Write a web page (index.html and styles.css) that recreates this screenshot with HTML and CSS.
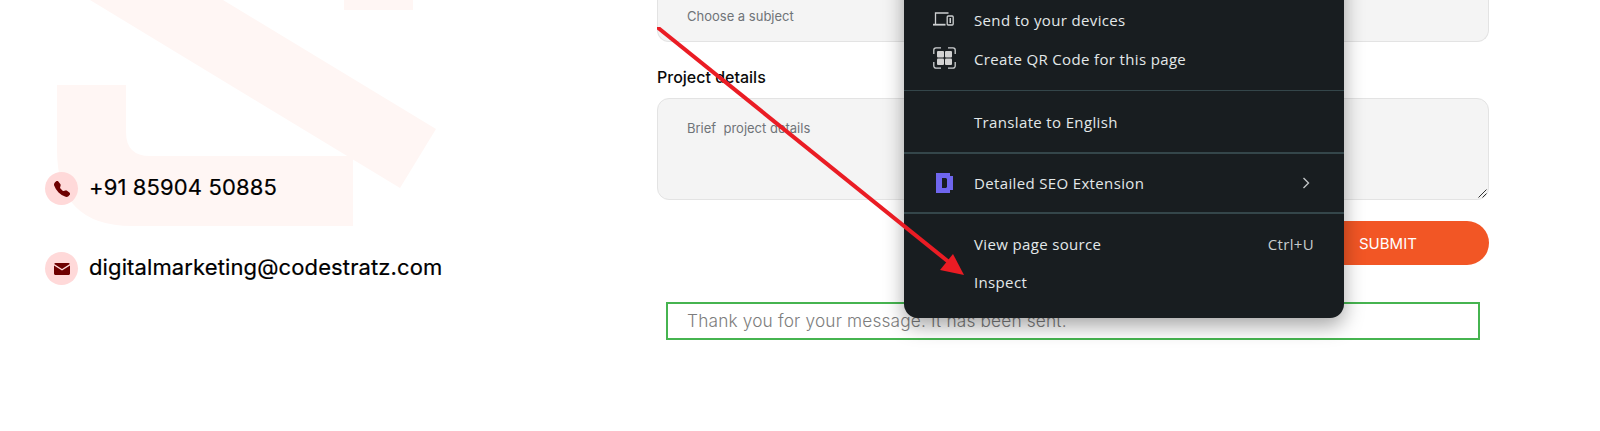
FILE: index.html
```html
<!DOCTYPE html>
<html lang="en">
<head>
<meta charset="utf-8">
<title>Contact</title>
<link rel="stylesheet" href="styles.css">
</head>
<body>
<div class="page">
  <svg class="watermark" width="440" height="230" viewBox="0 0 440 230" aria-hidden="true">
    <path d="M90 0H223L436 129L400 188Z"/>
    <path d="M344 0H413V10H344Z"/>
    <path d="M57 85H126V132Q126 156 150 156H353V226H132Q57 226 57 150Z"/>
  </svg>

  <section class="contact">
    <div class="contact-row">
      <span class="badge">
        <svg width="16" height="16" viewBox="0 0 16 16"><path d="M1.885.511a1.745 1.745 0 0 1 2.61.163L6.29 2.98c.329.423.445.974.315 1.494l-.547 2.19a.678.678 0 0 0 .178.643l2.457 2.457a.678.678 0 0 0 .644.178l2.189-.547a1.745 1.745 0 0 1 1.494.315l2.306 1.794c.829.645.905 1.87.163 2.611l-1.034 1.034c-.74.74-1.846 1.065-2.877.702a18.634 18.634 0 0 1-7.01-4.42 18.634 18.634 0 0 1-4.42-7.009c-.362-1.03-.037-2.137.703-2.877L1.885.511z"/></svg>
      </span>
      <span class="contact-text">+91 85904 50885</span>
    </div>
    <div class="contact-row">
      <span class="badge">
        <svg width="16" height="12" viewBox="0 0 16 12"><path d="M1.5 0h13c.6 0 1.1.4 1.3.9L8 6 .2.9C.4.4.9 0 1.5 0zM0 2.5V10.500c0 .8.700 1.500 1.500 1.500h13c.8 0 1.500-.7 1.500-1.500V2.500L8 7.600z"/></svg>
      </span>
      <span class="contact-text">digitalmarketing@codestratz.com</span>
    </div>
  </section>

  <section class="form">
    <div class="field field-top">Choose a subject</div>
    <div class="label">Project details</div>
    <div class="field field-area">
      Brief&nbsp; project details
      <svg class="grip" width="10" height="10" viewBox="0 0 10 10"><path d="M9.500 1.500L1.500 9.500M9.500 5.500L5.500 9.500" stroke="#333" stroke-width="1" fill="none"/></svg>
    </div>
    <div class="actions"><span class="submit">SUBMIT</span></div>
    <div class="notice">Thank you for your message. It has been sent.</div>
  </section>

  <nav class="menu">
    <div class="item item-a">
      <span class="icon">
        <svg class="devices" width="21" height="14" viewBox="0 0 21 14" fill="none" stroke="#cdd0d1" stroke-width="1.300"><path d="M2.500 12V1h13"/><path d="M0 12.700H12.500" stroke-width="1.800"/><rect x="14.200" y="4" width="6" height="9" rx="1"/><rect x="16.500" y="6" width="1.500" height="5" fill="#cdd0d1" stroke="none"/></svg>
      </span>
      <span>Send to your devices</span>
    </div>
    <div class="item item-b">
      <span class="icon">
        <svg class="qr" width="23" height="22" viewBox="0 0 23 22"><path d="M8 .8H3a2.200 2.200 0 0 0-2.200 2.200V7M15 .8h5a2.200 2.200 0 0 1 2.200 2.200V7M8 21.200H3A2.200 2.200 0 0 1 .8 19V15M15 21.200h5a2.200 2.200 0 0 0 2.200-2.200V15" fill="none" stroke="#cdd0d1" stroke-width="1.300"/><rect x="4" y="4" width="7" height="6.500" rx="1" fill="#d2d2d2"/><rect x="12" y="4" width="7" height="6.500" rx="1" fill="#d2d2d2"/><rect x="4" y="11.500" width="7" height="6.500" rx="1" fill="#d2d2d2"/><rect x="12" y="11.500" width="7" height="6.500" rx="1" fill="#d2d2d2"/></svg>
      </span>
      <span>Create QR Code for this page</span>
    </div>
    <div class="sep sep-a"></div>
    <div class="item item-c"><span class="icon"></span><span>Translate to English</span></div>
    <div class="sep sep-b"></div>
    <div class="item item-d">
      <span class="icon">
        <svg class="seo" width="17" height="20" viewBox="0 0 17 20"><path d="M0 0H14V3H17V17H14V20H0ZM6 5V15H10L11 14V6L10 5Z" fill="#6f66ee" fill-rule="evenodd"/></svg>
      </span>
      <span class="grow">Detailed SEO Extension</span>
      <svg width="8" height="12" viewBox="0 0 8 12"><path d="M1.500 1L6.500 6L1.500 11" fill="none" stroke="#c0c4c5" stroke-width="1.400"/></svg>
    </div>
    <div class="sep sep-c"></div>
    <div class="item item-e"><span class="icon"></span><span class="grow">View page source</span><span class="shortcut">Ctrl+U</span></div>
    <div class="item item-f"><span class="icon"></span><span>Inspect</span></div>
  </nav>

  <svg class="arrow" width="320" height="260" viewBox="657 27 320 260" aria-hidden="true">
    <path d="M657 27L950 263" stroke="#ea1c24" stroke-width="4" fill="none"/>
    <path d="M964 275L940 270L953 254Z" fill="#ea1c24"/>
  </svg>
</div>
</body>
</html>
```

FILE: styles.css
```css
* { box-sizing: border-box; }
html, body { margin: 0; padding: 0; background: #fff; }
.page {
  position: relative;
  width: 1600px;
  height: 431px;
  overflow: hidden;
  display: grid;
  grid-template-columns: 657px 832px;
  font-family: "Inter", "Liberation Sans", sans-serif;
}
.watermark { position: absolute; left: 0; top: 0; fill: #fff6f4; }
.contact {
  position: relative;
  padding: 172px 0 0 45px;
  display: flex;
  flex-direction: column;
  gap: 47px;
}
.contact-row { display: flex; align-items: center; gap: 11px; height: 33px; }
.badge {
  width: 33px;
  height: 33px;
  border-radius: 50%;
  background: #ffd9d9;
  display: flex;
  align-items: center;
  justify-content: center;
  fill: #6e0000;
  flex: none;
}
.contact-text { font-size: 22px; font-weight: 400; letter-spacing: .12px; color: #000; position: relative; top: -2px; -webkit-text-stroke: .2px #000; }
.form { display: flex; flex-direction: column; color: #6f7378; }
.field {
  background: #f4f4f4;
  border: 1px solid #e3e3e3;
  font-size: 13px;
  padding-left: 29px;
}
.field-top {
  height: 42px;
  border-top: 0;
  border-radius: 0 0 12px 12px;
  padding-top: 8px;
  line-height: 16px;
}
.label { margin-top: 25px; height: 20px; line-height: 20px; font-size: 16px; font-weight: 500; color: #0a0a0a; }
.field-area {
  position: relative;
  margin-top: 11px;
  height: 102px;
  border-radius: 12px;
  padding-top: 20px;
  line-height: 18px;
}
.grip { position: absolute; right: 1px; bottom: 1px; }
.actions { display: flex; justify-content: flex-end; margin-top: 21px; }
.submit {
  width: 160px;
  height: 44px;
  border-radius: 0 22px 22px 0;
  background: #f25625;
  color: #fff;
  font-size: 15px;
  font-weight: 400;
  display: flex;
  align-items: center;
  padding-left: 30px;
}
.notice {
  margin: 37px 9px 0 9px;
  height: 38px;
  border: 2px solid #46b450;
  padding-left: 19px;
  font-size: 17.3px;
  letter-spacing: .16px;
  line-height: 33px;
  font-weight: 300;
  color: #7d7d7d;
}
.menu {
  position: absolute;
  left: 904px;
  top: -40px;
  width: 440px;
  height: 358px;
  background: #181d20;
  border-radius: 0 0 14px 14px;
  box-shadow: 0 8px 20px rgba(0, 0, 0, .35);
  color: #e3e8e9;
  font-family: "Open Sans", "Noto Sans", sans-serif;
  font-size: 15px;
  letter-spacing: .35px;
  padding-top: 41px;
}
.item { display: flex; align-items: center; height: 38px; padding: 0 31px 0 29px; }
.icon { width: 41px; flex: none; display: flex; }
.devices, .qr { margin-top: -2px; }
.seo { margin-left: 3px; }
.grow { flex: 1; }
.shortcut { color: #c7cccd; }
.sep { height: 1px; background: #34464a; }
.item-b { margin-top: 1px; }
.sep-a { margin-top: 12px; }
.item-c { margin-top: 12px; }
.sep-b { margin-top: 11px; height: 2px; }
.item-d { margin-top: 10px; padding-right: 34px; }
.sep-c { margin-top: 10px; height: 2px; }
.item-e { margin-top: 11px; padding-right: 30px; }
.item-f { margin-top: 0; }
.arrow { position: absolute; left: 657px; top: 27px; }
```
